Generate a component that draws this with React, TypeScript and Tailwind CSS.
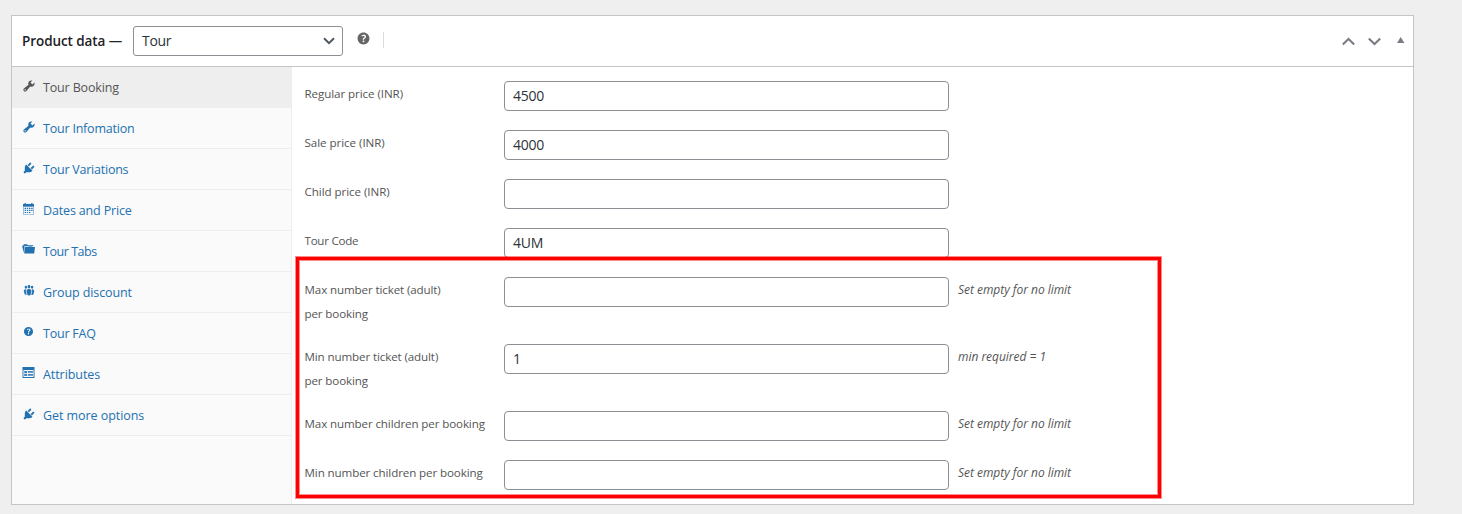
import React from "react";

interface Tab {
  icon: React.ReactNode;
  label: string;
  tracking: string;
}

interface Field {
  label: React.ReactNode;
  tracking: string;
  value?: string;
  hint?: string;
}

const Wrench = () => (
  <svg viewBox="0 0 20 20" className="h-[14px] w-[14px]" fill="currentColor">
    <path d="M16.68 9.77c-1.34 1.34-3.3 1.67-4.95.99l-5.41 6.52c-.99.99-2.59.99-3.58 0s-.99-2.59 0-3.57l6.52-5.42c-.68-1.65-.35-3.61.99-4.95 1.28-1.28 3.12-1.62 4.72-1.06l-2.89 2.89 2.82 2.82 2.86-2.87c.53 1.58.18 3.39-1.08 4.65zM3.81 16.21c.4.39 1.04.39 1.43 0 .4-.4.4-1.04 0-1.43-.39-.4-1.03-.4-1.43 0-.39.39-.39 1.03 0 1.43z" />
  </svg>
);

const Plug = () => (
  <svg viewBox="0 0 20 20" className="h-[14px] w-[14px]" fill="currentColor">
    <path d="M13.11 4.36L9.87 7.6 8 5.73l3.24-3.24c.35-.34 1.05-.2 1.56.32.52.51.66 1.21.31 1.55zM5.09 6.13l.91-1.12 9.01 9.01-1.19.84c-.71.71-2.63 1.16-3.82 1.16H6.14L4.9 17.26c-.59.59-1.54.59-2.12 0-.59-.58-.59-1.53 0-2.12l1.24-1.24v-3.88c0-1.13.4-3.19 1.07-3.89zm7.28 3.97l3.24-3.24c.34-.35 1.04-.21 1.55.31.52.51.66 1.21.31 1.55l-3.24 3.25z" />
  </svg>
);

const Calendar = () => (
  <svg viewBox="0 0 13 13" className="h-[14px] w-[13px]" fill="currentColor">
    <path d="M1 1.5h1.5V.5h1.3v1h5.4v-1h1.3v1H12V4H1z" />
    <path d="M1 4h11v8H1zM1.6 4.4v7h9.8v-7z" fillRule="evenodd" opacity=".75" />
    <path d="M2.6 5.2h1.4v1.2H2.6zM4.8 5.2h1.4v1.2H4.8zM7 5.2h1.4v1.2H7zM9.2 5.2h1.4v1.2H9.2zM2.6 7.3h1.4v1.2H2.6zM4.8 7.3h1.4v1.2H4.8zM7 7.3h1.4v1.2H7zM9.2 7.3h1.4v1.2H9.2zM2.6 9.4h1.4v1.2H2.6zM4.8 9.4h1.4v1.2H4.8zM7 9.4h1.4v1.2H7z" />
  </svg>
);

const Folder = () => (
  <svg viewBox="0 0 13 13" className="h-[13px] w-[13px]" fill="currentColor">
    <path d="M0 2.8h1.2l.6-1.5h3.4l.7.9h5.4v1H2.3L1.9 9.8z" />
    <path d="M2.7 4h3.4l.6-.6h3l.4.6H13l-.8 6.4H2.2z" />
  </svg>
);

const Groups = () => (
  <svg viewBox="0 0 20 20" className="-mt-px h-[14px] w-[14px]" fill="currentColor">
    <path d="M8.03 4.46c-.29 1.28.55 3.46 1.97 3.46 1.41 0 2.25-2.18 1.96-3.46-.22-.98-1.08-1.63-1.96-1.63-.89 0-1.74.65-1.97 1.63zm-4.13.9c-.25 1.08.47 2.93 1.67 2.93s1.92-1.85 1.67-2.93c-.19-.83-.92-1.39-1.67-1.39s-1.48.56-1.67 1.39zm8.86 0c-.25 1.08.47 2.93 1.66 2.93 1.2 0 1.92-1.85 1.67-2.93-.19-.83-.92-1.39-1.67-1.39-.74 0-1.47.56-1.66 1.39zm-.59 11.43l1.25-4.3C14.2 10 12.71 8.47 10 8.47c-2.72 0-4.21 1.53-3.44 4.02l1.26 4.3C8.05 17.51 9 18 10 18c.98 0 1.94-.49 2.17-1.21zm-6.1-7.63c-.49.67-.96 1.83-.42 3.59l1.12 3.79c-.34.2-.77.31-1.2.31-.85 0-1.65-.41-1.85-1.03l-1.07-3.65c-.65-2.11.61-3.4 2.92-3.4.27 0 .54.02.79.06zm8.35-.06c2.31 0 3.58 1.29 2.92 3.4l-1.07 3.65c-.2.62-1 1.03-1.85 1.03-.43 0-.86-.11-1.2-.31l1.11-3.77c.55-1.78.08-2.94-.42-3.61.26-.04.53-.06.79-.06z" />
  </svg>
);

const Help = () => (
  <svg viewBox="0 0 20 20" className="h-full w-full" fill="currentColor">
    <path d="M17 10c0-3.87-3.14-7-7-7-3.87 0-7 3.13-7 7s3.13 7 7 7c3.86 0 7-3.13 7-7zm-6.3 1.48H9.14v-.43c0-.38.08-.7.24-.98s.46-.57.88-.89c.41-.29.68-.53.81-.71.14-.18.2-.39.2-.62 0-.25-.09-.44-.28-.58-.19-.13-.45-.19-.79-.19-.58 0-1.25.19-2 .57l-.64-1.28c.87-.49 1.8-.74 2.77-.74.81 0 1.45.2 1.92.58.48.39.71.91.71 1.55 0 .43-.09.8-.29 1.11-.19.32-.57.67-1.11 1.06-.38.28-.61.49-.71.63-.1.15-.15.34-.15.57v.35zm-1.47 2.74c-.18-.17-.27-.42-.27-.73 0-.33.08-.58.26-.75s.43-.25.77-.25c.32 0 .57.09.75.26s.27.42.27.74c0 .3-.09.55-.27.72-.18.18-.43.27-.75.27-.33 0-.58-.09-.76-.26z" />
  </svg>
);

const Attributes = () => (
  <svg viewBox="0 0 13 13" className="h-[13px] w-[13px]" fill="currentColor">
    <path d="M.5 1h12v11H.5zM1.4 4v7h10.2V4z" fillRule="evenodd" />
    <path d="M2.2 5h3v2.2h-3zM6 5h5v1.8H6zM2.2 8h3v2h-3zM6 8h5v1.8H6z" opacity=".85" />
  </svg>
);

const tabs: Tab[] = [
  { icon: <Wrench />, label: "Tour Booking", tracking: "tracking-[-0.16px]" },
  { icon: <Wrench />, label: "Tour Infomation", tracking: "tracking-[-0.21px]" },
  { icon: <Plug />, label: "Tour Variations", tracking: "tracking-[-0.23px]" },
  { icon: <Calendar />, label: "Dates and Price", tracking: "tracking-[-0.15px]" },
  { icon: <Folder />, label: "Tour Tabs", tracking: "tracking-[-0.45px]" },
  { icon: <Groups />, label: "Group discount", tracking: "tracking-[-0.1px]" },
  { icon: <Help />, label: "Tour FAQ", tracking: "tracking-[-0.22px]" },
  { icon: <Attributes />, label: "Attributes", tracking: "tracking-[-0.07px]" },
  { icon: <Plug />, label: "Get more options", tracking: "tracking-[-0.06px]" },
];

const fields: Field[] = [
  { label: "Regular price (INR)", tracking: "tracking-[-0.08px]", value: "4500" },
  { label: "Sale price (INR)", tracking: "tracking-[-0.05px]", value: "4000" },
  { label: "Child price (INR)", tracking: "tracking-[-0.06px]" },
  { label: "Tour Code", tracking: "tracking-[-0.25px]", value: "4UM" },
  {
    label: (
      <>
        Max number ticket (adult)
        <br />
        per booking
      </>
    ),
    tracking: "tracking-[-0.12px]",
    hint: "Set empty for no limit",
  },
  {
    label: (
      <>
        Min number ticket (adult)
        <br />
        per booking
      </>
    ),
    tracking: "tracking-[-0.12px]",
    value: "1",
    hint: "min required = 1",
  },
  {
    label: "Max number children per booking",
    tracking: "tracking-[-0.12px]",
    hint: "Set empty for no limit",
  },
  {
    label: "Min number children per booking",
    tracking: "tracking-[-0.11px]",
    hint: "Set empty for no limit",
  },
];

export default function App() {
  return (
    <div className="relative h-[514px] w-[1462px] overflow-hidden bg-[#efefef] pt-[15px] pl-[11px] font-['Open_Sans','Noto_Sans',sans-serif]">
      <div className="flex h-[490px] w-[1403px] flex-col border border-[#c3c4c7] bg-white">
        {/* Header */}
        <div className="flex h-[51px] shrink-0 items-center border-b border-[#c3c4c7] pl-[10px] text-[#1d2327]">
          <h2 className="w-[111px] pb-px text-[13.5px] leading-6 font-semibold tracking-[-0.08px] whitespace-nowrap">
            Product data —
          </h2>
          <button className="flex h-[30px] w-[210px] items-center justify-between rounded-[3px] border border-[#8c8f94] pr-[7px] pl-2 text-[#2c3338]">
            <span className="text-sm leading-7 tracking-[-0.3px]">Tour</span>
            <svg viewBox="0 0 12 8" className="h-2 w-3" fill="none" stroke="#50575e" strokeWidth="2">
              <path d="M1 1.2l5 5 5-5" />
            </svg>
          </button>
          <span className="mb-[5px] ml-3 h-[17px] w-[17px] text-[#666]">
            <Help />
          </span>
          <span className="mb-0.5 ml-[11px] h-4 w-px bg-[#dcdcde]" />
          <div className="ml-auto flex items-center pr-[8px] text-[#787c82]">
            <svg viewBox="0 0 14 9" className="h-[9px] w-[14px]" fill="none" stroke="currentColor" strokeWidth="2">
              <path d="M.8 7.5L6.5 2l5.7 5.5" />
            </svg>
            <svg viewBox="0 0 14 9" className="ml-3 h-[9px] w-[14px]" fill="none" stroke="currentColor" strokeWidth="2">
              <path d="M.8 1.5L6.5 7l5.7-5.5" />
            </svg>
            <svg viewBox="0 0 8 6" className="mb-0.5 ml-[15px] h-[6px] w-2" fill="currentColor">
              <path d="M0 6l3.7-6 3.7 6z" />
            </svg>
          </div>
        </div>

        <div className="flex flex-1">
          {/* Tabs */}
          <ul className="w-[280px] border-r border-[#eee] bg-[#fafafa]">
            {tabs.map((tab, index) => (
              <li
                key={index}
                className={
                  index === 0
                    ? "flex h-[41px] items-start border-b border-[#eee] bg-[#eee] pt-[9px] pl-[10px] text-[#555]"
                    : "flex h-[41px] items-start border-b border-[#eee] pt-[9px] pl-[10px] text-[#2271b1]"
                }
              >
                <span className="mt-[3px] mr-2 h-[13px] w-[13px]">{tab.icon}</span>
                <span className={`text-[12.5px] leading-[23px] ${tab.tracking}`}>{tab.label}</span>
              </li>
            ))}
          </ul>

          {/* Fields */}
          <div className="flex flex-1 flex-col gap-[19px] pt-[14px] pl-[12px] text-[#555]">
            {fields.map((field, index) => (
              <div key={index} className="flex items-start">
                <label className={`-mb-px w-[200px] pt-px pl-[0.5px] text-[11.6px] leading-6 whitespace-nowrap ${field.tracking}`}>
                  {field.label}
                </label>
                <div className="h-[30px] w-[445px] rounded-[4px] border border-[#8c8f94] bg-white pl-2 text-sm leading-7 tracking-[-0.25px] text-[#2c3338]">
                  {field.value}
                </div>
                {field.hint && (
                  <em className="ml-[9px] pt-px text-xs leading-6 tracking-[-0.03px]">{field.hint}</em>
                )}
              </div>
            ))}
          </div>
        </div>
      </div>

      {/* Highlight frame */}
      <div className="absolute top-[257px] left-[296px] h-[241px] w-[865px] border-3 border-[#ff0000] shadow-[0_0_0_1px_rgba(255,0,0,0.45),inset_0_0_0_1px_rgba(255,0,0,0.45)]" />
    </div>
  );
}
